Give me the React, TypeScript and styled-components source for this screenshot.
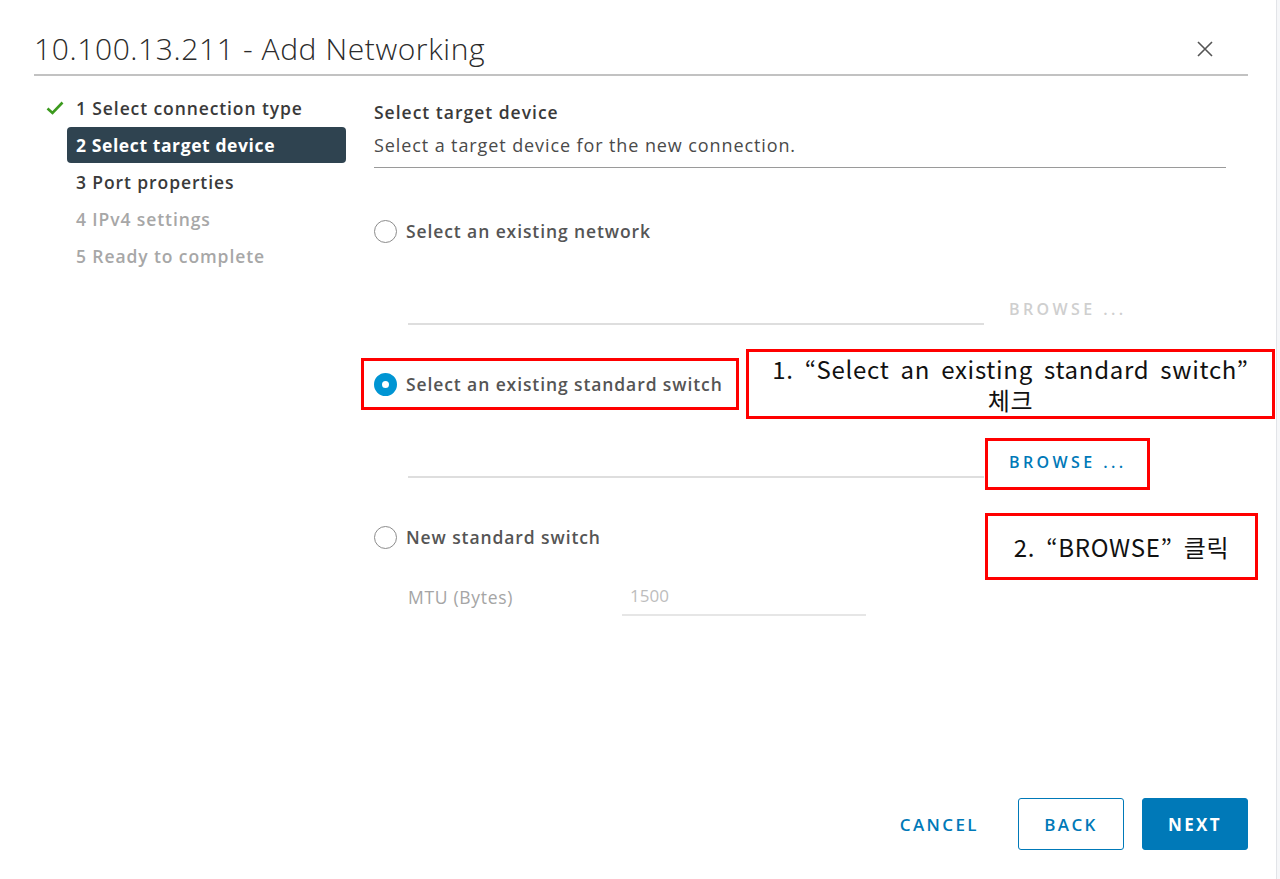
import React from "react";
import styled, { createGlobalStyle, css } from "styled-components";

const GlobalStyle = createGlobalStyle`
  html, body {
    margin: 0;
    padding: 0;
    background: #ffffff;
  }
  body {
    font-family: "Open Sans", "Noto Sans", sans-serif;
    color: #333333;
  }
  * {
    box-sizing: border-box;
  }
`;

const BLUE = "#0079b8";

const steps = [
  { label: "1 Select connection type", state: "done" },
  { label: "2 Select target device", state: "active" },
  { label: "3 Port properties", state: "todo" },
  { label: "4 IPv4 settings", state: "disabled" },
  { label: "5 Ready to complete", state: "disabled" },
];

const App: React.FC = () => {
  return (
    <>
      <GlobalStyle />
      <Page>
        <Dialog>
          <Header>
            <Title>10.100.13.211 - Add Networking</Title>
            <CloseButton aria-label="close">
              <svg width="16" height="16" viewBox="0 0 16 16">
                <path d="M1 1 L15 15 M15 1 L1 15" stroke="#555" strokeWidth="1.6" fill="none" />
              </svg>
            </CloseButton>
          </Header>

          <Body>
            <Nav>
              {steps.map((s) => (
                <NavRow key={s.label}>
                  <CheckSlot>
                    {s.state === "done" && (
                      <svg width="18" height="14" viewBox="0 0 18 14">
                        <path d="M1.5 7.5 L6.5 12 L16.5 1.5" stroke="#3c9a1e" strokeWidth="2.6" fill="none" />
                      </svg>
                    )}
                  </CheckSlot>
                  <NavItem $state={s.state}>{s.label}</NavItem>
                </NavRow>
              ))}
            </Nav>

            <Content>
              <SectionHead>
                <Heading>Select target device</Heading>
                <SubHeading>Select a target device for the new connection.</SubHeading>
              </SectionHead>

              <Options>
                <Option>
                  <RadioRow>
                    <Radio />
                    <RadioLabel>Select an existing network</RadioLabel>
                  </RadioRow>
                  <PickerRow>
                    <PickerField />
                    <BrowseButton disabled>BROWSE ...</BrowseButton>
                  </PickerRow>
                </Option>

                <Option>
                  <RadioRow>
                    <Radio $checked />
                    <RadioLabel>Select an existing standard switch</RadioLabel>
                  </RadioRow>
                  <PickerRow>
                    <PickerField />
                    <BrowseButton>BROWSE ...</BrowseButton>
                  </PickerRow>
                </Option>

                <Option>
                  <RadioRow>
                    <Radio />
                    <RadioLabel>New standard switch</RadioLabel>
                  </RadioRow>
                  <MtuRow>
                    <MtuLabel>MTU (Bytes)</MtuLabel>
                    <MtuField>1500</MtuField>
                  </MtuRow>
                </Option>
              </Options>
            </Content>
          </Body>

          <Footer>
            <FlatButton>CANCEL</FlatButton>
            <OutlineButton>BACK</OutlineButton>
            <SolidButton>NEXT</SolidButton>
          </Footer>
        </Dialog>
        <EdgeStrip />

        {/* annotation overlays */}
        <Mark $x={361} $y={358} $w={378} $h={52} />
        <Mark $x={985} $y={438} $w={165} $h={52} />
        <Note $x={746} $y={349} $w={529} $h={70}>
          <span>1. “Select an existing standard switch”</span>
          <span>체크</span>
        </Note>
        <Note $x={985} $y={513} $w={273} $h={67}>
          <span>2. “BROWSE” 클릭</span>
        </Note>
      </Page>
    </>
  );
};

const Page = styled.div`
  position: relative;
  width: 1280px;
  height: 879px;
  display: flex;
  overflow: hidden;
  background: #fff;
`;

const Dialog = styled.div`
  flex: 1;
  display: flex;
  flex-direction: column;
  padding: 0 28px 29px 34px;
`;

const EdgeStrip = styled.div`
  width: 4px;
  background: #f6f7f9;
  border-left: 1px solid #e2e4e8;
`;

const Header = styled.div`
  height: 76px;
  display: flex;
  align-items: center;
  justify-content: space-between;
  padding-top: 22px;
  border-bottom: 2px solid #c2c2c2;
`;

const Title = styled.h1`
  margin: 0;
  font-family: "Open Sans", sans-serif;
  font-weight: 300;
  font-size: 30px;
  letter-spacing: 0.6px;
  color: #2b2b2b;
`;

const CloseButton = styled.button`
  border: none;
  background: none;
  padding: 0;
  margin-right: 35px;
  margin-top: 2px;
  display: flex;
  cursor: pointer;
`;

const Body = styled.div`
  flex: 1;
  display: flex;
`;

const Nav = styled.div`
  width: 300px;
  margin-left: 12px;
  padding-top: 14px;
  display: flex;
  flex-direction: column;
  gap: 1px;
`;

const NavRow = styled.div`
  display: flex;
  align-items: center;
`;

const CheckSlot = styled.div`
  width: 21px;
  display: flex;
  align-items: center;
`;

const NavItem = styled.div<{ $state: string }>`
  flex: 1;
  height: 36px;
  line-height: 36px;
  padding-left: 9px;
  border-radius: 4px;
  font-size: 17.5px;
  font-weight: 600;
  letter-spacing: 0.9px;
  color: #3a3a3a;
  white-space: nowrap;
  ${(p) =>
    p.$state === "active" &&
    css`
      background: #2f4350;
      color: #fff;
      font-weight: 700;
      letter-spacing: 0.6px;
    `}
  ${(p) =>
    p.$state === "disabled" &&
    css`
      color: #a7a7a7;
    `}
`;

const Content = styled.div`
  width: 852px;
  margin-left: 28px;
  padding-top: 24px;
`;

const SectionHead = styled.div`
  padding-bottom: 10px;
  border-bottom: 1px solid #9a9a9a;
`;

const Heading = styled.div`
  font-size: 17.5px;
  line-height: 24px;
  font-weight: 600;
  letter-spacing: 1px;
  color: #3a3a3a;
`;

const SubHeading = styled.div`
  margin-top: 9px;
  font-size: 18px;
  line-height: 24px;
  letter-spacing: 0.9px;
  color: #4a4a4a;
`;

const Options = styled.div`
  padding-top: 51px;
  display: flex;
  flex-direction: column;
  gap: 47px;
`;

const Option = styled.div`
  display: flex;
  flex-direction: column;
`;

const RadioRow = styled.div`
  display: flex;
  align-items: center;
  height: 24px;
`;

const Radio = styled.span<{ $checked?: boolean }>`
  width: 23px;
  height: 23px;
  border-radius: 50%;
  border: 1px solid #8c8c8c;
  background: #fff;
  margin-right: 9px;
  ${(p) =>
    p.$checked &&
    css`
      border: 8px solid #0095d3;
      background: #fff;
    `}
`;

const RadioLabel = styled.span`
  font-size: 17.5px;
  font-weight: 600;
  letter-spacing: 0.9px;
  color: #555;
  white-space: nowrap;
`;

const PickerRow = styled.div`
  display: flex;
  align-items: flex-end;
  margin-top: 50px;
  padding-left: 34px;
  height: 32px;
`;

const PickerField = styled.div`
  width: 576px;
  height: 100%;
  border-bottom: 2px solid #dedede;
`;

const BrowseButton = styled.button`
  border: none;
  background: none;
  margin-left: 13px;
  padding: 0 12px;
  height: 32px;
  line-height: 32px;
  align-self: flex-start;
  font-family: "Open Sans", sans-serif;
  font-size: 16px;
  font-weight: 600;
  letter-spacing: 3.4px;
  color: ${BLUE};
  cursor: pointer;
  white-space: nowrap;
  &:disabled {
    color: #cfcfcf;
    cursor: default;
  }
`;

const MtuRow = styled.div`
  display: grid;
  grid-template-columns: 214px 244px;
  align-items: end;
  margin-top: 32px;
  padding-left: 34px;
`;

const MtuLabel = styled.span`
  font-size: 17.5px;
  letter-spacing: 0.7px;
  color: #a5a5a5;
  line-height: 30px;
  padding-bottom: 4px;
`;

const MtuField = styled.div`
  padding-left: 8px;
  padding-bottom: 3px;
  font-size: 17px;
  line-height: 30px;
  color: #bdbdbd;
  border-bottom: 2px solid #e6e6e6;
`;

const Footer = styled.div`
  display: flex;
  justify-content: flex-end;
  align-items: center;
  gap: 18px;
`;

const buttonBase = css`
  height: 52px;
  min-width: 106px;
  padding: 0 24px;
  border-radius: 3px;
  font-family: "Open Sans", sans-serif;
  font-size: 17px;
  font-weight: 600;
  letter-spacing: 2.4px;
  cursor: pointer;
`;

const FlatButton = styled.button`
  ${buttonBase};
  border: none;
  background: none;
  color: ${BLUE};
  margin-right: -3px;
`;

const OutlineButton = styled.button`
  ${buttonBase};
  border: 1.5px solid ${BLUE};
  background: #fff;
  color: ${BLUE};
`;

const SolidButton = styled.button`
  ${buttonBase};
  border: 1px solid ${BLUE};
  background: ${BLUE};
  color: #fff;
  font-weight: 700;
`;

const Mark = styled.div<{ $x: number; $y: number; $w: number; $h: number }>`
  position: absolute;
  left: ${(p) => p.$x}px;
  top: ${(p) => p.$y}px;
  width: ${(p) => p.$w}px;
  height: ${(p) => p.$h}px;
  border: 3px solid #ff0000;
  pointer-events: none;
`;

const Note = styled(Mark)`
  background: #fff;
  display: flex;
  flex-direction: column;
  align-items: center;
  justify-content: center;
  text-align: center;
  font-family: "Noto Sans CJK KR", "Noto Sans", sans-serif;
  font-size: 24px;
  line-height: 31px;
  color: #111;
  letter-spacing: 0.7px;
  word-spacing: 5px;
  white-space: nowrap;

  span {
    display: block;
    height: 31px;
  }
`;

export default App;
